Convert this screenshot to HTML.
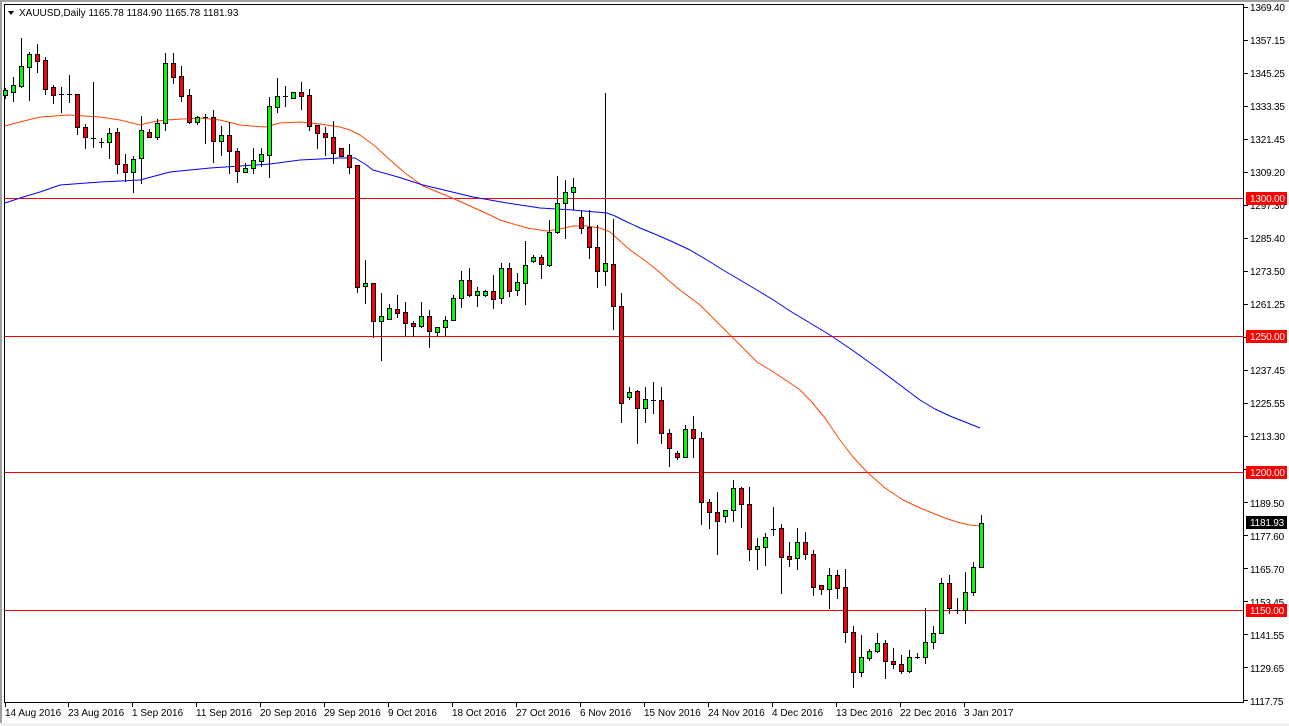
<!DOCTYPE html>
<html><head><meta charset="utf-8"><style>
html,body{margin:0;padding:0;background:#fff;width:1289px;height:726px;overflow:hidden}
svg{display:block}
text{font-family:"Liberation Sans",sans-serif;font-size:10px;fill:#000}
.p{letter-spacing:-0.2px}
</style></head><body>
<svg id="s" width="1289" height="726" xmlns="http://www.w3.org/2000/svg">
<rect x="0" y="0" width="1289" height="726" fill="#fff"/>
<rect x="0" y="0" width="1289" height="2" fill="#a0a0a0"/>
<rect x="0" y="0" width="2" height="726" fill="#a0a0a0"/>
<rect x="0" y="723" width="1289" height="3" fill="#f0f0f0"/>
<rect x="4.5" y="4.5" width="1239" height="698" fill="none" stroke="#000" stroke-width="1"/>
<g stroke="#ff0000" stroke-width="1">
<line x1="5" y1="198.5" x2="1244" y2="198.5"/>
<line x1="5" y1="336.5" x2="1244" y2="336.5"/>
<line x1="5" y1="472.5" x2="1244" y2="472.5"/>
<line x1="5" y1="610.5" x2="1244" y2="610.5"/>
</g>
<polyline fill="none" stroke="#ff4500" stroke-width="1" stroke-linejoin="round" points="5,126 20,122 40,117 69,115 100,117 120,120 140,125 152,122 165,120 200,118 220,120 240,125 265,127 280,123 300,122 320,124 340,127 350,130 360,135 375,146 390,160 405,173 423,186 450,197 470,206 490,215 500,220 527,228 547,231 560,229 573,226 587,226 600,228 610,232 620,241 630,250 643,259 657,270 668,280 680,290 700,305 715,320 730,335 745,350 757,362 775,373 790,383 800,390 810,400 825,418 840,440 853,457 867,472 885,488 903,500 918,507 930,512 945,518 957,522 970,525 980,526"/>
<polyline fill="none" stroke="#0000ff" stroke-width="1" stroke-linejoin="round" points="5,203 20,198 40,192 60,185 100,182 140,180 155,176 170,172 210,168 240,166 270,164 300,160 340,158 355,158 365,164 373,170 398,177 423,185 448,191 473,197 490,200 507,203 540,208 573,210 607,213 615,216 623,220 640,228 657,235 673,242 690,250 707,260 723,270 740,280 757,290 775,301 790,311 810,323 830,335 855,352 880,370 900,385 920,400 935,409 950,416 965,422 980,428"/>
<g id="c"></g>
<g id="ticks" stroke="#000"></g>
<g class="p">
<text x="1250" y="11">1369.40</text>
<text x="1250" y="44">1357.15</text>
<text x="1250" y="77">1345.25</text>
<text x="1250" y="110">1333.35</text>
<text x="1250" y="143">1321.45</text>
<text x="1250" y="176">1309.20</text>
<text x="1250" y="209">1297.30</text>
<text x="1250" y="242">1285.40</text>
<text x="1250" y="275">1273.50</text>
<text x="1250" y="308">1261.25</text>
<text x="1250" y="374">1237.45</text>
<text x="1250" y="407">1225.55</text>
<text x="1250" y="440">1213.30</text>
<text x="1250" y="507">1189.50</text>
<text x="1250" y="540">1177.60</text>
<text x="1250" y="573">1165.70</text>
<text x="1250" y="606">1153.45</text>
<text x="1250" y="639">1141.55</text>
<text x="1250" y="672">1129.65</text>
<text x="1250" y="705">1117.75</text>
</g>
<g class="p">
<rect x="1246" y="192" width="41" height="13" fill="#ff0000"/><text x="1250" y="202" style="fill:#fff">1300.00</text>
<rect x="1246" y="330" width="41" height="13" fill="#ff0000"/><text x="1250" y="340" style="fill:#fff">1250.00</text>
<rect x="1246" y="466" width="41" height="13" fill="#ff0000"/><text x="1250" y="476" style="fill:#fff">1200.00</text>
<rect x="1246" y="516" width="41" height="13" fill="#000"/><text x="1250" y="526" style="fill:#fff">1181.93</text>
<rect x="1246" y="604" width="41" height="13" fill="#ff0000"/><text x="1250" y="614" style="fill:#fff">1150.00</text>
</g>
<polygon points="8,11 14,11 11,15" fill="#000"/>
<text x="19" y="16">XAUUSD,Daily  1165.78 1184.90 1165.78 1181.93</text>
<g id="dt" stroke="#000"></g>
<g>
<text x="5" y="716">14 Aug 2016</text>
<text x="68" y="716">23 Aug 2016</text>
<text x="132" y="716">1 Sep 2016</text>
<text x="196" y="716">11 Sep 2016</text>
<text x="260" y="716">20 Sep 2016</text>
<text x="324" y="716">29 Sep 2016</text>
<text x="388" y="716">9 Oct 2016</text>
<text x="452" y="716">18 Oct 2016</text>
<text x="516" y="716">27 Oct 2016</text>
<text x="580" y="716">6 Nov 2016</text>
<text x="644" y="716">15 Nov 2016</text>
<text x="708" y="716">24 Nov 2016</text>
<text x="772" y="716">4 Dec 2016</text>
<text x="836" y="716">13 Dec 2016</text>
<text x="900" y="716">22 Dec 2016</text>
<text x="964" y="716">3 Jan 2017</text>
</g>
</svg>
<script>
var D=[
[5,88,98,90,95,'g'],[13,77,101,85,92,'g'],[21,38,87,66,86,'g'],[29,52,100,54,67,'g'],[37,44,72,54,61,'r'],
[45,57,94,60,89,'r'],[53,85,103,87,95,'r'],[61,87,112,94,94,'d'],[69,75,102,94,94,'d'],[77,94,134,94,127,'r'],
[85,124,148,127,137,'r'],[93,82,147,138,138,'d'],[101,138,147,142,142,'d'],[109,128,158,133,142,'g'],[117,128,173,132,164,'r'],
[125,154,181,164,172,'r'],[133,156,192,159,172,'g'],[141,116,183,130,158,'g'],[149,129,137,132,137,'r'],[157,119,139,123,137,'g'],
[165,53,130,63,123,'g'],[173,53,83,63,77,'r'],[181,66,101,76,96,'r'],[189,89,123,95,122,'r'],[197,116,124,117,122,'g'],
[205,114,143,117,117,'d'],[213,110,162,117,141,'r'],[221,126,155,135,141,'g'],[229,122,173,135,151,'r'],[237,148,182,151,171,'r'],
[245,163,172,168,172,'g'],[253,148,173,160,168,'g'],[261,148,166,154,161,'g'],[269,97,177,106,155,'g'],[277,78,112,96,107,'g'],
[285,86,106,96,96,'d'],[293,92,98,92,98,'g'],[301,82,109,92,96,'r'],[309,89,130,95,126,'r'],[317,125,148,125,133,'r'],
[325,127,155,133,137,'r'],[333,121,163,137,153,'r'],[341,148,156,148,156,'r'],[349,144,173,155,167,'r'],[357,165,292,165,287,'r'],
[365,260,303,283,286,'g'],[373,283,337,283,321,'r'],[381,293,360,316,321,'g'],[389,304,319,308,319,'g'],[397,295,317,309,313,'r'],
[405,302,335,312,323,'r'],[413,321,336,323,326,'r'],[421,302,327,316,326,'g'],[429,310,347,316,331,'r'],[437,327,335,327,332,'g'],
[445,316,335,320,327,'g'],[453,295,320,298,320,'g'],[461,271,307,280,298,'g'],[469,268,296,280,295,'r'],[477,287,306,291,295,'g'],
[485,290,296,291,295,'g'],[493,275,308,291,299,'r'],[501,263,303,268,298,'g'],[509,263,296,268,291,'r'],[517,273,295,282,290,'g'],
[525,241,304,265,283,'g'],[533,255,262,257,261,'g'],[541,255,278,257,264,'r'],[549,220,266,232,265,'g'],[557,176,233,203,232,'g'],
[565,180,238,192,203,'g'],[573,178,209,187,192,'g'],[581,211,233,217,228,'r'],[589,210,258,227,247,'r'],[597,225,287,247,271,'r'],
[605,93,285,263,271,'g'],[613,219,329,264,306,'r'],[621,293,422,306,403,'r'],[629,387,399,392,397,'g'],[637,390,443,391,408,'r'],
[645,387,422,399,408,'g'],[653,382,413,400,400,'d'],[661,387,443,400,433,'r'],[669,429,466,433,448,'r'],[677,451,459,453,457,'r'],
[685,425,457,429,457,'g'],[693,416,457,429,438,'r'],[701,432,524,438,502,'r'],[709,499,528,502,512,'r'],[717,492,554,512,521,'r'],
[725,510,522,510,516,'g'],[733,480,521,488,510,'g'],[741,487,527,488,504,'r'],[749,487,560,504,549,'r'],[757,538,569,546,549,'g'],
[765,533,565,537,547,'g'],[773,507,535,529,529,'d'],[781,524,593,528,557,'r'],[789,542,566,556,559,'r'],[797,528,569,542,558,'g'],
[805,532,559,542,554,'r'],[813,550,595,554,587,'r'],[821,585,594,585,589,'r'],[829,568,608,575,589,'g'],[837,570,598,575,588,'r'],
[845,569,642,587,632,'r'],[853,626,687,632,672,'r'],[861,635,676,657,672,'g'],[869,649,660,651,658,'g'],[877,633,652,643,651,'g'],
[885,640,678,643,661,'r'],[893,648,668,661,664,'r'],[901,655,673,664,671,'r'],[909,650,672,657,671,'g'],[917,653,658,657,657,'d'],
[925,608,663,642,657,'g'],[933,626,648,633,642,'g'],[941,578,633,583,633,'g'],[949,575,613,583,608,'r'],[957,598,613,610,610,'d'],
[965,572,623,592,610,'g'],[973,562,595,567,592,'g'],[981,515,567,523,567,'g']];
var g=document.getElementById('c'),h='';
D.forEach(function(d){var x=d[0];
h+='<line x1="'+(x+.5)+'" y1="'+d[1]+'" x2="'+(x+.5)+'" y2="'+(d[2]+1)+'" stroke="#000"/>';
if(d[5]=='d'){h+='<line x1="'+(x-2)+'" y1="'+(d[3]+.5)+'" x2="'+(x+3)+'" y2="'+(d[3]+.5)+'" stroke="#000"/>';}
else{var hh=Math.max(d[4]-d[3],1);h+='<rect x="'+(x-1.5)+'" y="'+(d[3]+.5)+'" width="4" height="'+hh+'" fill="'+(d[5]=='g'?'#00ff00':'#ff0000')+'" stroke="#000"/>';}
});
g.innerHTML=h;
var t='';for(var i=0;i<22;i++){var y=7+i*33+.5;t+='<line x1="1244" y1="'+y+'" x2="1248" y2="'+y+'"/>';}
document.getElementById('ticks').innerHTML=t;
var xs=[5,68,132,196,260,324,388,452,516,580,644,708,772,836,900,964],u='';
xs.forEach(function(x){u+='<line x1="'+(x+.5)+'" y1="703" x2="'+(x+.5)+'" y2="707"/>';});
document.getElementById('dt').innerHTML=u;
</script>
</body></html>
